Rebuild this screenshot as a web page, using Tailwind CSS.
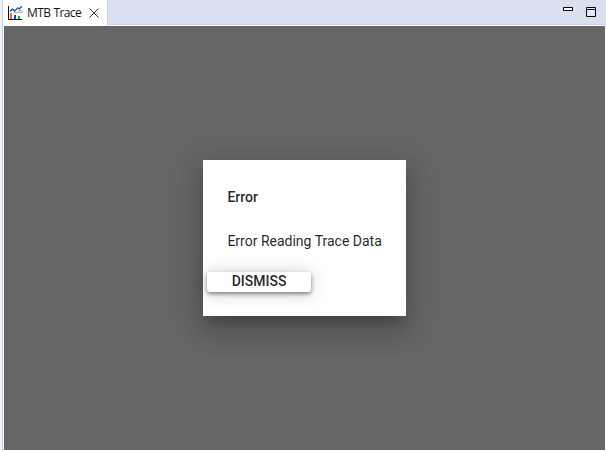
<!DOCTYPE html>
<html lang="en">
<head>
<meta charset="utf-8">
<title>MTB Trace</title>
<script src="https://cdn.jsdelivr.net/npm/@tailwindcss/browser@4"></script>
</head>
<body class="h-[451px] w-[606px] overflow-hidden bg-[#f0f2f8] pl-[2px]">
<div class="flex h-full flex-col border-l border-[#c5cee4] bg-white">
  <header class="flex h-[25px] shrink-0 border-b border-[#ced5e6] bg-[#d9dfee]">
    <div class="flex h-[25px] w-[105px] shrink-0 items-center border-r border-[#cbd3e6] bg-white pl-[5px]">
      <svg class="mt-px size-[15px] shrink-0" viewBox="0 0 15 15">
        <path d="M0 0h1v13h13v1H0z" fill="#111"/>
        <path d="M6 6.5h8M11 6V4.5h3V7" fill="none" stroke="#b0b2b8"/>
        <path d="M2 5.5l2.5-2.500l2 2L10 1.800l1.300 1L14 .3" fill="none" stroke="#1b50a8" stroke-width="1.3"/>
        <path d="M2 7h2v6H2z" fill="#ff6418"/>
        <path d="M6 9h2v4H6z" fill="#1440f0"/>
        <path d="M10 10h2v3h-2z" fill="#12b521"/>
      </svg>
      <span class="ml-[4px] w-[55px] whitespace-nowrap font-['Open_Sans',sans-serif] text-[12px] leading-[16px] tracking-[-0.6px] text-[#151515] [word-spacing:0.6px]">MTB Trace</span>
      <svg class="mt-px ml-[7px] size-[10px] shrink-0" viewBox="0 0 10 10"><path d="M.5.5l9 9M9.5.5l-9 9" stroke="#222" stroke-width=".9"/></svg>
    </div>
    <div class="flex flex-1 items-start justify-end gap-[13px] pr-[10px] pt-[7px]">
      <svg class="h-[4px] w-[10px]" viewBox="0 0 10 4"><path d="M.5.5h9v3h-9z" fill="#fff" stroke="#000"/></svg>
      <svg class="size-[10px]" viewBox="0 0 10 10"><path d="M.5.5h9v9h-9zM.5 2.5h9" fill="#e4e9f4" stroke="#000"/></svg>
    </div>
  </header>
  <main class="ml-px mr-px mt-px mb-px flex flex-1 flex-col items-start overflow-hidden bg-[#666] pl-[199px] pt-[134px] font-[Roboto,sans-serif] text-[14px] text-black/87">
    <section class="h-[156px] w-[203px] bg-white shadow-[0_8px_10px_-5px_rgba(0,0,0,0.2),0_16px_24px_2px_rgba(0,0,0,0.14),0_6px_30px_5px_rgba(0,0,0,0.12)]">
      <h1 class="ml-[24.4px] pt-[27px] text-[14px] leading-[20px] font-medium">Error</h1>
      <p class="mt-6 ml-[24.4px] leading-[20px] whitespace-nowrap">Error Reading Trace Data</p>
      <button class="mt-[21px] ml-1 block h-[20px] w-[104px] rounded-[3px] bg-white pb-[2px] text-center text-[14px] leading-[18px] font-medium shadow-[0_2px_4px_rgba(0,0,0,0.45),0_1px_20px_rgba(0,0,0,0.18)]">DISMISS</button>
    </section>
  </main>
</div>
</body>
</html>
